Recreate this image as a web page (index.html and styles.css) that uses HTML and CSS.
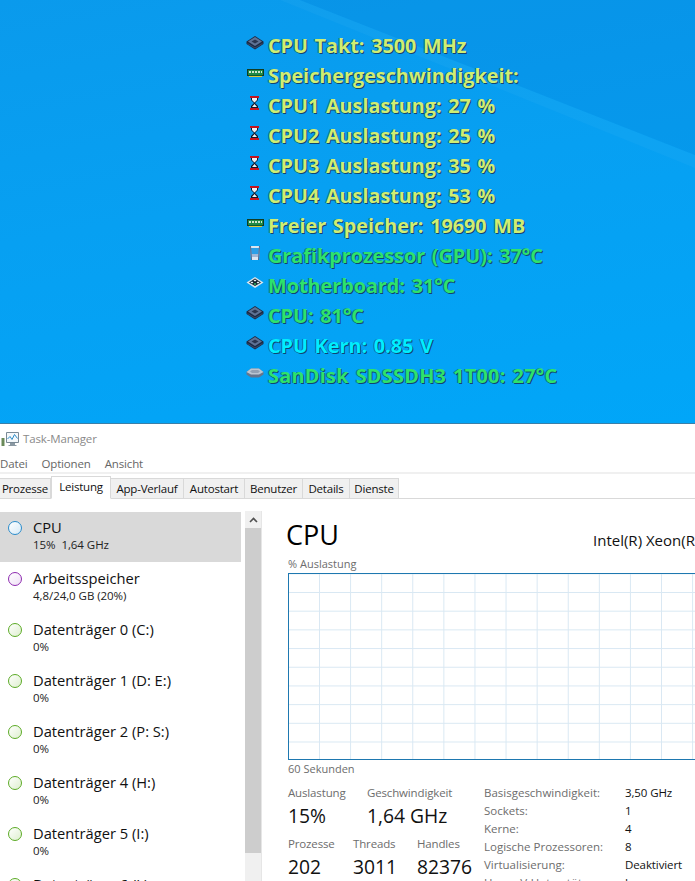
FILE: index.html
```html
<!DOCTYPE html>
<html lang="de">
<head>
<meta charset="utf-8">
<title>Task-Manager</title>
<link rel="stylesheet" href="styles.css">
</head>
<body>
<svg class="defs" width="0" height="0" aria-hidden="true">
  <symbol id="i-cpu" viewBox="0 0 18 14">
    <path d="M9 0 17.500 5.500V8L9 13.500.5 8V5.500Z" fill="#1d2a44"/>
    <path d="M9 1 16 5.500 9 10 2 5.500Z" fill="#5f7396"/>
    <path d="M9 3.500 12.500 5.500 9 7.500 5.500 5.500Z" fill="#2a3650"/>
    <path d="M1.500 7 9 11.500 16.500 7V8L9 12.500 1.500 8Z" fill="#3c4c6c"/>
  </symbol>
  <symbol id="i-ram" viewBox="0 0 17 8">
    <rect width="17" height="7" fill="#123c22"/>
    <rect x="1" y="1" width="15" height="5" fill="#1f8a48"/>
    <path d="M2 2h2v2H2zM5 2h2v2H5zM8 2h2v2H8zM11 2h2v2h-2zM14 2h1v2h-1z" fill="#cfe6cc"/>
    <path d="M2 6h13v1H2z" fill="#0f5a2c"/>
    <path d="M2 7h13v1H2z" fill="#d8c83a"/>
  </symbol>
  <symbol id="i-glass" viewBox="0 0 9 14">
    <path d="M0 0h9v2H0zM0 12h9v2H0z" fill="#c4141e"/>
    <path d="M1 2h7v2L5 7l3 3v2H1v-2l3-3-3-3z" fill="#10162a"/>
    <path d="M2 2h5v2L4.500 6.500 2 4zM2 11 4.500 8 7 11z" fill="#eef2f6"/>
  </symbol>
  <symbol id="i-gpu" viewBox="0 0 12 16">
    <path d="M1 1h10l-1 14H2z" fill="#9fb8d8"/>
    <path d="M2 3h8l-.5 6h-7z" fill="#2a9fe8"/>
    <path d="M1 1h10v2H1zM3 12h6v3H3z" fill="#dce6f2"/>
    <path d="M1 1h1l1 14H2zM10 1h1l-1 14H9z" fill="#50688c"/>
  </symbol>
  <symbol id="i-board" viewBox="0 0 18 12">
    <path d="M9 0 17.500 5.500 9 11 .5 5.500Z" fill="#dbe3ea"/>
    <path d="M9 1.500 15 5.500 9 9 3 5.500Z" fill="#11202c"/>
    <path d="M9 2.500 10.500 3.500 9 4.500 7.500 3.500ZM6 4.500 7.500 5.500 6 6.500 4.500 5.500ZM12 4.500 13.500 5.500 12 6.500 10.500 5.500Z" fill="#eef4f8"/>
    <path d="M9 6 10.500 7 9 8 7.500 7Z" fill="#36c66a"/>
  </symbol>
  <symbol id="i-disk" viewBox="0 0 18 10">
    <path d="M5 .5h8L17.500 4v2.500L13 9.500H5L.5 6.500V4Z" fill="#66758c"/>
    <path d="M5 .5h8L17.500 4 13 6.500H5L.5 4Z" fill="#bac5d2"/>
    <path d="M6 2h6l2 1.500-2 1.500H6L4 3.500Z" fill="#93a1b3"/>
  </symbol>
</svg>

<section class="desktop">
  <div class="beam"></div>
  <div class="readout">
    <div class="line yellow"><span class="ico"><svg class="i-cpu"><use href="#i-cpu"/></svg></span>CPU Takt: 3500 MHz</div>
    <div class="line yellow"><span class="ico"><svg class="i-ram"><use href="#i-ram"/></svg></span>Speichergeschwindigkeit:</div>
    <div class="line yellow"><span class="ico"><svg class="i-glass"><use href="#i-glass"/></svg></span>CPU1 Auslastung: 27 %</div>
    <div class="line yellow"><span class="ico"><svg class="i-glass"><use href="#i-glass"/></svg></span>CPU2 Auslastung: 25 %</div>
    <div class="line yellow"><span class="ico"><svg class="i-glass"><use href="#i-glass"/></svg></span>CPU3 Auslastung: 35 %</div>
    <div class="line yellow"><span class="ico"><svg class="i-glass"><use href="#i-glass"/></svg></span>CPU4 Auslastung: 53 %</div>
    <div class="line yellow"><span class="ico"><svg class="i-ram"><use href="#i-ram"/></svg></span>Freier Speicher: 19690 MB</div>
    <div class="line green"><span class="ico"><svg class="i-gpu"><use href="#i-gpu"/></svg></span>Grafikprozessor (GPU): 37°C</div>
    <div class="line green"><span class="ico"><svg class="i-board"><use href="#i-board"/></svg></span>Motherboard: 31°C</div>
    <div class="line green"><span class="ico"><svg class="i-cpu"><use href="#i-cpu"/></svg></span>CPU: 81°C</div>
    <div class="line cyan"><span class="ico"><svg class="i-cpu"><use href="#i-cpu"/></svg></span>CPU Kern: 0.85 V</div>
    <div class="line green wide"><span class="ico"><svg class="i-disk"><use href="#i-disk"/></svg></span>SanDisk SDSSDH3 1T00: 27°C</div>
  </div>
</section>

<section class="tm">
  <header class="titlebar">
    <svg class="tm-icon" viewBox="0 0 18 16" width="18" height="16" aria-hidden="true">
      <path d="M5.500 1.500h12v10h-12z" fill="#f4f8fb" stroke="#7a8a96"/>
      <path d="M6.500 8 9 5.500l2 3 2.500-5 3 4" fill="none" stroke="#2c8cc8"/>
      <path d="M9 12h5v2H9zM7.500 14h8v1h-8z" fill="#8a98a2"/>
      <path d="M.5 7h3v8h-3z" fill="#6a8a5a"/>
    </svg>
    <span>Task-Manager</span>
  </header>
  <nav class="menu"><span>Datei</span><span>Optionen</span><span>Ansicht</span></nav>
  <div class="tabs">
    <span class="tab t-proz">Prozesse</span>
    <span class="tab active t-leis">Leistung</span>
    <span class="tab t-app">App-Verlauf</span>
    <span class="tab t-auto">Autostart</span>
    <span class="tab t-ben">Benutzer</span>
    <span class="tab t-det">Details</span>
    <span class="tab t-dien">Dienste</span>
  </div>
  <div class="body">
    <aside class="side">
      <div class="item selected"><i class="dot blue"></i><div class="meta"><div class="name">CPU</div><div class="sub">15%&nbsp; 1,64 GHz</div></div></div>
      <div class="item"><i class="dot purple"></i><div class="meta"><div class="name">Arbeitsspeicher</div><div class="sub">4,8/24,0 GB (20%)</div></div></div>
      <div class="item"><i class="dot lime"></i><div class="meta"><div class="name">Datenträger 0 (C:)</div><div class="sub">0%</div></div></div>
      <div class="item"><i class="dot lime"></i><div class="meta"><div class="name">Datenträger 1 (D: E:)</div><div class="sub">0%</div></div></div>
      <div class="item"><i class="dot lime"></i><div class="meta"><div class="name">Datenträger 2 (P: S:)</div><div class="sub">0%</div></div></div>
      <div class="item"><i class="dot lime"></i><div class="meta"><div class="name">Datenträger 4 (H:)</div><div class="sub">0%</div></div></div>
      <div class="item"><i class="dot lime"></i><div class="meta"><div class="name">Datenträger 5 (I:)</div><div class="sub">0%</div></div></div>
      <div class="item"><i class="dot lime"></i><div class="meta"><div class="name">Datenträger 6 (J:)</div><div class="sub">0%</div></div></div>
    </aside>
    <div class="scrollbar">
      <div class="sb-up"><svg viewBox="0 0 9 6" width="9" height="6" aria-hidden="true"><path d="M1 5 4.500 1.500 8 5" fill="none" stroke="#505050" stroke-width="1.600"/></svg></div>
      <div class="sb-thumb"></div>
    </div>
    <main class="main">
      <div class="head"><h1>CPU</h1><div class="model">Intel(R) Xeon(R) CPU E3-1245 v3 @ 3.40GHz</div></div>
      <div class="cap top">% Auslastung</div>
      <div class="chart"></div>
      <div class="cap below">60 Sekunden</div>
      <div class="stats">
        <div class="left">
          <div class="s-row">
            <div class="stat w79"><div class="lab">Auslastung</div><div class="val">15%</div></div>
            <div class="stat"><div class="lab">Geschwindigkeit</div><div class="val">1,64 GHz</div></div>
          </div>
          <div class="s-row second">
            <div class="stat w65"><div class="lab">Prozesse</div><div class="val">202</div></div>
            <div class="stat w64"><div class="lab">Threads</div><div class="val">3011</div></div>
            <div class="stat"><div class="lab">Handles</div><div class="val">82376</div></div>
          </div>
        </div>
        <dl class="facts">
          <dt>Basisgeschwindigkeit:</dt><dd>3,50 GHz</dd>
          <dt>Sockets:</dt><dd>1</dd>
          <dt>Kerne:</dt><dd>4</dd>
          <dt>Logische Prozessoren:</dt><dd>8</dd>
          <dt>Virtualisierung:</dt><dd>Deaktiviert</dd>
          <dt>Hyper-V-Unterstützung:</dt><dd>Ja</dd>
        </dl>
      </div>
    </main>
  </div>
</section>
</body>
</html>
```
FILE: styles.css
```css
* { box-sizing: border-box; }
html, body { margin: 0; padding: 0; }
body {
  width: 695px;
  height: 881px;
  overflow: hidden;
  background: #fff;
  font-family: "Open Sans", "Noto Sans", sans-serif;
}
.defs { position: absolute; }

/* Desktop */
.desktop {
  position: relative;
  height: 424px;
  padding: 30px 0 0 246px;
  overflow: hidden;
  background: linear-gradient(170deg, #0a9aec 0%, #07a0f2 45%, #01a6f8 100%);
  border-bottom: 1px solid #3a7fa8;
}
.beam {
  position: absolute;
  inset: 0;
  background: rgba(0, 50, 160, .07);
  clip-path: polygon(300px 0, 695px 0, 695px 155px);
}
.desktop::after {
  content: "";
  position: absolute;
  inset: 0;
  background: rgba(255, 255, 255, .03);
  clip-path: polygon(280px 0, 300px 0, 695px 155px, 695px 168px);
}
.readout { position: relative; z-index: 1; }
.line {
  display: flex;
  align-items: center;
  height: 30px;
  font-size: 19.800px;
  font-weight: 700;
  word-spacing: 1.500px;
  white-space: nowrap;
  text-shadow: 1px 1px 0 rgba(20,50,90,.85), -1px 0 0 rgba(20,50,90,.5);
}
.line.wide { letter-spacing: .3px; }
.yellow { color: #cfee72; }
.green { color: #2ee26c; }
.cyan { color: #00eeff; }
.ico {
  flex: none;
  display: flex;
  justify-content: center;
  width: 18px;
  margin: -4px 4px 0 0;
}
.i-cpu { width: 18px; height: 14px; }
.i-ram { width: 17px; height: 8px; }
.i-glass { width: 9px; height: 14px; margin-right: 2px; }
.i-gpu { width: 12px; height: 16px; }
.i-board { width: 18px; height: 12px; }
.i-disk { width: 18px; height: 10px; }

/* Task manager */
.tm { height: 457px; overflow: hidden; background: #fff; color: #000; }
.titlebar {
  display: flex;
  align-items: center;
  gap: 4px;
  height: 30px;
  padding: 0 0 1px 1px;
  font-size: 11.500px;
  letter-spacing: -.15px;
  color: #8a8a8a;
}
.tm-icon { flex: none; }
.menu {
  display: flex;
  gap: 14px;
  height: 20px;
  align-items: center;
  font-size: 11.500px;
  letter-spacing: -.15px;
  color: #666;
  border-bottom: 2px solid #f0f0f0;
}
.tabs {
  position: relative;
  display: flex;
  align-items: flex-end;
  height: 25px;
  border-bottom: 1px solid #d9d9d9;
}
.tab {
  display: flex;
  align-items: center;
  justify-content: center;
  height: 21px;
  margin-bottom: -1px;
  font-size: 11.500px;
  letter-spacing: -.2px;
  color: #111;
  background: #f0f0f0;
  border: 1px solid #d9d9d9;
  border-left: 0;
}
.tab.active {
  height: 23px;
  padding-bottom: 3px;
  background: #fff;
  border-left: 1px solid #d9d9d9;
  border-bottom: 1px solid #fff;
}
.t-proz { width: 51px; border-left: 0; }
.t-leis { width: 60px; }
.t-app { width: 73px; }
.t-auto { width: 61px; }
.t-ben { width: 58px; }
.t-det { width: 47px; }
.t-dien { width: 49px; }

.body { display: flex; height: 383px; padding-top: 13px; }
.side { width: 245px; flex: none; overflow: hidden; }
.item {
  display: flex;
  width: 241px;
  height: 51px;
  padding: 7px 0 0 8px;
}
.item.selected { background: #d9d9d9; height: 50px; margin-bottom: 1px; }
.dot {
  flex: none;
  width: 14px;
  height: 14px;
  margin-top: 2px;
  border-radius: 50%;
  border: 1.5px solid;
}
.blue { border-color: #2b8ccb; background: linear-gradient(135deg, #fff, #d6eaf7); }
.purple { border-color: #8e2bb0; background: linear-gradient(135deg, #fff, #efe0f6); }
.lime { border-color: #5cab26; background: linear-gradient(135deg, #fff, #deefcf); }
.meta { margin-left: 11px; }
.name { font-size: 14.700px; line-height: 17px; white-space: nowrap; color: #111; }
.sub { margin-top: 1px; font-size: 11.500px; line-height: 15px; letter-spacing: -.05px; color: #222; white-space: nowrap; }

.scrollbar {
  flex: none;
  width: 17px;
  height: 370px;
  margin-top: -1px;
  background: #f0f0f0;
  border-right: 1px solid #e6e6e6;
}
.sb-up { display: flex; justify-content: center; align-items: center; height: 17px; }
.sb-thumb { width: 16px; height: 325px; background: #cdcdcd; }

.main { flex: 1; min-width: 0; padding-left: 24px; margin-top: -13px; overflow: hidden; }
.head {
  display: flex;
  justify-content: space-between;
  align-items: flex-end;
  height: 58px;
  white-space: nowrap;
}
.head h1 { margin: 0 0 4px; font-size: 27px; line-height: 36px; font-weight: 400; color: #000; }
.model { width: 102px; flex: none; font-size: 15px; line-height: 22px; margin-bottom: 6px; color: #111; }
.cap { font-size: 11px; line-height: 14px; color: #6d6d6d; padding-left: 2px; }
.cap.top { height: 16px; }
.chart {
  width: 420px;
  height: 187px;
  margin-left: 2px;
  border: 1.500px solid #1e78b0;
  border-right: 0;
  background-color: #fff;
  background-image:
    linear-gradient(to right, #d9e8f3 1px, transparent 1px),
    linear-gradient(to bottom, #d9e8f3 1px, transparent 1px);
  background-size: 31.100px 18.700px;
  background-position: 30px 18px;
}
.cap.below { height: 16px; padding-top: 2px; }
.stats { display: flex; padding: 8px 0 0 2px; }
.left { flex: none; width: 196px; }
.s-row { display: flex; }
.s-row.second { margin-top: 5px; }
.w79 { width: 79px; }
.w65 { width: 65px; }
.w64 { width: 64px; }
.lab { font-size: 11.500px; line-height: 18px; letter-spacing: -.15px; color: #6d6d6d; white-space: nowrap; }
.val { font-size: 19.300px; line-height: 28px; color: #111; white-space: nowrap; }
.facts {
  display: grid;
  grid-template-columns: 141px auto;
  grid-auto-rows: 18px;
  margin: 0;
  font-size: 11.500px;
  line-height: 18px;
  white-space: nowrap;
}
.facts dt { color: #6d6d6d; }
.facts dd { margin: 0; letter-spacing: -.1px; color: #111; }
```
